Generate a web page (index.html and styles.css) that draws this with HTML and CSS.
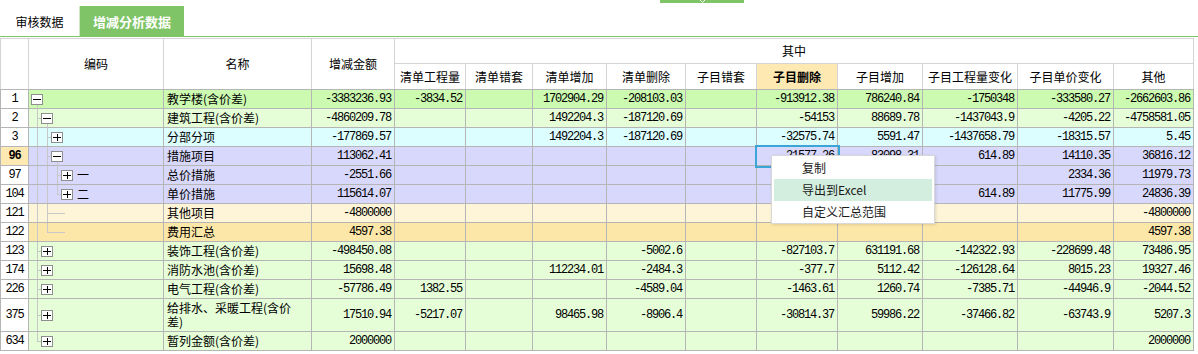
FILE: index.html
```html
<!DOCTYPE html>
<html lang="zh-CN">
<head>
    <meta charset="UTF-8">
    <meta name="viewport" content="width=device-width, initial-scale=1.0">
    <title>增减分析数据</title>
    <link rel="stylesheet" href="styles.css">
</head>
<body>
    <!-- 顶部折叠把手 -->
    <div class="handle">
        <svg width="7" height="3" viewBox="0 0 7 3"><polyline points="1,0 3.5,2.5 6,0" fill="none" stroke="#fff" stroke-width="1"/></svg>
    </div>

    <!-- 页签 -->
    <div class="tabs">
        <div class="tab">审核数据</div>
        <div class="tab active">增减分析数据</div>
    </div>

    <!-- 增减分析表 -->
    <table class="grid">
        <colgroup>
            <col class="c-rn">
            <col class="c-code">
            <col class="c-name">
            <col class="c-total">
            <col class="c-qdgcl">
            <col class="c-qdct">
            <col class="c-qdzj">
            <col class="c-qdsc">
            <col class="c-zmct">
            <col class="c-zmsc">
            <col class="c-zmzj">
            <col class="c-zmgcl">
            <col class="c-zmdj">
            <col class="c-other">
        </colgroup>
        <thead>
            <tr class="head-top">
                <th rowspan="2"></th>
                <th rowspan="2">编码</th>
                <th rowspan="2">名称</th>
                <th rowspan="2">增减金额</th>
                <th colspan="10">其中</th>
            </tr>
            <tr class="head-sub">
                <th>清单工程量</th>
                <th>清单错套</th>
                <th>清单增加</th>
                <th>清单删除</th>
                <th>子目错套</th>
                <th class="sorted">子目删除</th>
                <th>子目增加</th>
                <th>子目工程量变化</th>
                <th>子目单价变化</th>
                <th>其他</th>
            </tr>
        </thead>
        <tbody id="grid-body"></tbody>
    </table>

    <!-- 右键菜单 -->
    <div class="ctx-menu">
        <div class="ctx-item">复制</div>
        <div class="ctx-item hover">导出到Excel</div>
        <div class="ctx-item">自定义汇总范围</div>
    </div>

    <script>
        const rows = [
            { no: 1, cls: 'lv-root', tree: [], box: 'minus', name: '教学楼(含价差)',
              v: ['-3383236.93', '-3834.52', '', '1702904.29', '-208103.03', '', '-913912.38', '786240.84', '-1750348', '-333580.27', '-2662603.86'] },
            { no: 2, cls: 'lv-unit', tree: ['tee'], box: 'minus', name: '建筑工程(含价差)',
              v: ['-4860209.78', '', '', '1492204.3', '-187120.69', '', '-54153', '88689.78', '-1437043.9', '-4205.22', '-4758581.05'] },
            { no: 3, cls: 'lv-fbfx', tree: ['pipe', 'tee'], box: 'plus', name: '分部分项',
              v: ['-177869.57', '', '', '1492204.3', '-187120.69', '', '-32575.74', '5591.47', '-1437658.79', '-18315.57', '5.45'] },
            { no: 96, cls: 'lv-csxm', tree: ['pipe', 'tee'], box: 'minus', name: '措施项目', current: true, sel: 6,
              v: ['113062.41', '', '', '', '', '', '-21577.26', '83098.31', '614.89', '14110.35', '36816.12'] },
            { no: 97, cls: 'lv-csxm', tree: ['pipe', 'pipe', 'tee'], box: 'plus', code: '一', name: '总价措施',
              v: ['-2551.66', '', '', '', '', '', '', '', '', '2334.36', '11979.73'] },
            { no: 104, cls: 'lv-csxm', tree: ['pipe', 'pipe', 'elbow'], box: 'plus', code: '二', name: '单价措施',
              v: ['115614.07', '', '', '', '', '', '', '', '614.89', '11775.99', '24836.39'] },
            { no: 121, cls: 'lv-qtxm', tree: ['pipe', 'tee'], box: 'leaf', name: '其他项目',
              v: ['-4800000', '', '', '', '', '', '', '', '', '', '-4800000'] },
            { no: 122, cls: 'lv-fyhz', tree: ['pipe', 'elbow'], box: 'leaf', name: '费用汇总',
              v: ['4597.38', '', '', '', '', '', '', '', '', '', '4597.38'] },
            { no: 123, cls: 'lv-unit', tree: ['tee'], box: 'plus', name: '装饰工程(含价差)',
              v: ['-498450.08', '', '', '', '-5002.6', '', '-827103.7', '631191.68', '-142322.93', '-228699.48', '73486.95'] },
            { no: 174, cls: 'lv-unit', tree: ['tee'], box: 'plus', name: '消防水池(含价差)',
              v: ['15698.48', '', '', '112234.01', '-2484.3', '', '-377.7', '5112.42', '-126128.64', '8015.23', '19327.46'] },
            { no: 226, cls: 'lv-unit', tree: ['tee'], box: 'plus', name: '电气工程(含价差)',
              v: ['-57786.49', '1382.55', '', '', '-4589.04', '', '-1463.61', '1260.74', '-7385.71', '-44946.9', '-2044.52'] },
            { no: 375, cls: 'lv-unit', tree: ['tee'], box: 'plus', name: '给排水、采暖工程(含价差)',
              v: ['17510.94', '-5217.07', '', '98465.98', '-8906.4', '', '-30814.37', '59986.22', '-37466.82', '-63743.9', '5207.3'] },
            { no: 634, cls: 'lv-unit', tree: ['elbow'], box: 'plus', name: '暂列金额(含价差)',
              v: ['2000000', '', '', '', '', '', '', '', '', '', '2000000'] }
        ];

        function tampilkanBaris() {
            const tbody = document.getElementById('grid-body');
            tbody.innerHTML = '';

            rows.forEach(r => {
                const tr = tbody.insertRow();
                tr.className = r.cls;

                const cellNo = tr.insertCell();
                cellNo.className = 'rn' + (r.current ? ' current' : '');
                cellNo.textContent = r.no;

                const cellTree = tr.insertCell();
                cellTree.className = 'tree';
                let html = '<div class="node">';
                r.tree.forEach(t => { html += `<span class="ind ${t}"></span>`; });
                html += r.box === 'leaf' ? '<span class="leaf"></span>' : `<span class="box ${r.box}"></span>`;
                if (r.code) html += `<span class="code">${r.code}</span>`;
                html += '</div>';
                cellTree.innerHTML = html;

                const cellName = tr.insertCell();
                cellName.className = 'name';
                cellName.textContent = r.name;

                r.v.forEach((val, i) => {
                    const c = tr.insertCell();
                    c.className = 'num' + (r.sel === i ? ' selected' : '');
                    c.textContent = val;
                });
            });
        }

        tampilkanBaris();
    </script>
</body>
</html>
```

FILE: styles.css
```css
body {
    margin: 0;
    width: 1198px;
    position: relative;
    font-family: "Noto Sans CJK SC", sans-serif;
    font-size: 12px;
    color: #000;
    background-color: #fff;
}

/* top collapse handle */
.handle {
    width: 84px;
    height: 3px;
    margin-left: 660px;
    background-color: #80c468;
    display: flex;
    justify-content: center;
}

.handle svg {
    display: block;
}

/* tabs */
.tabs {
    display: flex;
    height: 30px;
    margin-top: 3px;
    border-bottom: 1px solid #80c468;
}

.tab {
    width: 79px;
    line-height: 32px;
    text-align: center;
    border-right: 1px solid #cfe8c4;
}

.tab.active {
    width: 104px;
    border-right: none;
    background-color: #80c468;
    color: #fff;
    font-weight: bold;
    font-size: 13px;
}

/* grid */
.grid {
    margin-top: 1px;
    width: 1194px;
    border-collapse: collapse;
    table-layout: fixed;
}

.c-rn { width: 28px; }
.c-code { width: 135px; }
.c-name { width: 148px; }
.c-total { width: 83px; }
.c-qdgcl { width: 71px; }
.c-qdct { width: 67px; }
.c-qdzj { width: 74px; }
.c-qdsc { width: 79px; }
.c-zmct { width: 71px; }
.c-zmsc { width: 81px; }
.c-zmzj { width: 85px; }
.c-zmgcl { width: 95px; }
.c-zmdj { width: 96px; }
.c-other { width: 80px; }

.grid th {
    font-weight: normal;
    line-height: 14px;
    padding: 5px 2px;
    border: 1px solid #d4d4d4;
    text-align: center;
    white-space: nowrap;
}

.grid .head-sub th {
    padding: 6px 2px 5px;
    border-bottom-color: #b5b5b5;
}

.grid th[rowspan] {
    border-bottom-color: #b5b5b5;
}

.grid th.sorted {
    background-color: #fee9b2;
    font-weight: bold;
}

.grid td {
    line-height: 14px;
    padding: 2px 3px;
    border: 1px solid #b5b5b5;
}

.lv-root { background-color: #ccfab0; }
.lv-unit { background-color: #e6fed8; }
.lv-fbfx { background-color: #dcfefe; }
.lv-csxm { background-color: #d8d8fc; }
.lv-qtxm { background-color: #fef4d8; }
.lv-fyhz { background-color: #fde7a8; }

.grid td.rn {
    padding: 0;
    text-align: center;
    background-color: #fff;
    font-family: "Liberation Mono", monospace;
    font-size: 12px;
    letter-spacing: -1.2px;
}

.grid td.rn.current {
    background-color: #fee9b2;
    font-weight: bold;
}

.grid td.name {
    padding-right: 8px;
}

.grid td.num {
    text-align: right;
    white-space: nowrap;
    font-family: "Liberation Mono", monospace;
    font-size: 12px;
    letter-spacing: -1.2px;
}

.grid td.selected {
    outline: 2px solid #3aa6d8;
}

/* tree column */
.grid td.tree {
    height: 18px;
    padding: 0 0 0 2px;
}

.node {
    display: flex;
    align-items: center;
    height: 100%;
    min-height: 18px;
}

.ind {
    width: 10px;
    align-self: stretch;
    flex-shrink: 0;
}

.ind.pipe {
    background: linear-gradient(#c8c8c8, #c8c8c8) no-repeat 6px 0 / 1px 100%;
}

.ind.tee {
    background:
        linear-gradient(#c8c8c8, #c8c8c8) no-repeat 6px 0 / 1px 100%,
        linear-gradient(#c8c8c8, #c8c8c8) no-repeat 6px 50% / 4px 1px;
}

.ind.elbow {
    background:
        linear-gradient(#c8c8c8, #c8c8c8) no-repeat 6px 0 / 1px 50%,
        linear-gradient(#c8c8c8, #c8c8c8) no-repeat 6px 50% / 4px 1px;
}

.leaf {
    width: 14px;
    height: 1px;
    background-color: #c8c8c8;
}

.box {
    position: relative;
    width: 12px;
    height: 11px;
    box-sizing: border-box;
    border: 1px solid #8e8e8e;
    background-color: #fff;
    flex-shrink: 0;
}

.box::before {
    content: "";
    position: absolute;
    left: 1px;
    top: 4px;
    width: 8px;
    height: 1px;
    background-color: #000;
}

.box.plus::after {
    content: "";
    position: absolute;
    left: 5px;
    top: 1px;
    width: 1px;
    height: 7px;
    background-color: #000;
}

.box.minus::after {
    content: "";
    position: absolute;
    left: 5px;
    top: 10px;
    width: 1px;
    height: 5px;
    background-color: #c8c8c8;
}

.code {
    margin-left: 4px;
}

/* context menu */
.ctx-menu {
    position: absolute;
    left: 771px;
    top: 155px;
    width: 164px;
    box-sizing: border-box;
    padding: 1px 2px 0;
    background-color: #fff;
    border: 1px solid #d8d8d8;
    box-shadow: 1px 1px 3px rgba(0, 0, 0, 0.12);
}

.ctx-item {
    height: 22px;
    line-height: 22px;
    padding-left: 28px;
    color: #1a1a1a;
}

.ctx-item.hover {
    background-color: #d3eedf;
}
```
